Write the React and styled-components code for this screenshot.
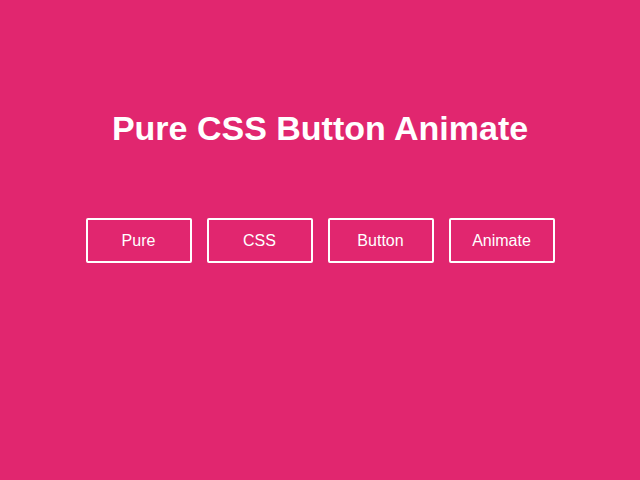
import React from "react";
import styled, { createGlobalStyle } from "styled-components";

const GlobalStyle = createGlobalStyle`
  html, body {
    margin: 0;
    height: 100%;
    background: #e1266f;
  }
  body {
    font-family: "Liberation Sans", Arial, sans-serif;
  }
`;

const labels = ["Pure", "CSS", "Button", "Animate"];

const Page = styled.div`
  display: flex;
  flex-direction: column;
  align-items: center;
  padding-top: 107px;
`;

const Title = styled.h1`
  margin: 0;
  font-size: 34px;
  font-weight: 700;
  line-height: 42px;
  color: #fff;
`;

const Row = styled.div`
  display: flex;
  gap: 15px;
  margin-top: 69px;
`;

const Button = styled.button`
  width: 106px;
  height: 45px;
  border: 2px solid #fff;
  border-radius: 2px;
  background: transparent;
  color: #fff;
  font-family: inherit;
  font-size: 16px;
  cursor: pointer;
`;

const App = () => (
  <>
    <GlobalStyle />
    <Page>
      <Title>Pure CSS Button Animate</Title>
      <Row>
        {labels.map((label) => (
          <Button key={label}>{label}</Button>
        ))}
      </Row>
    </Page>
  </>
);

export default App;
